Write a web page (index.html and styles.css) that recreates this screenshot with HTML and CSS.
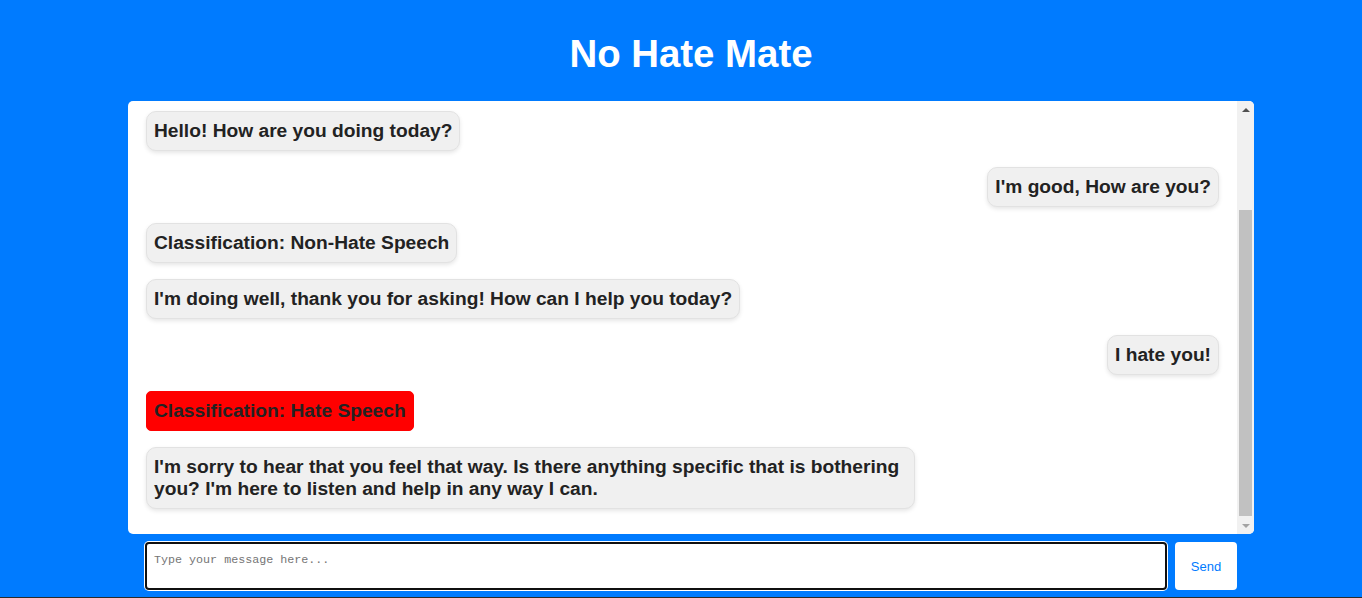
FILE: index.html
```html
<!DOCTYPE html>
<html lang="en">
<head>
<meta charset="utf-8">
<title>No Hate Mate</title>
<link rel="stylesheet" href="styles.css">
</head>
<body>
<main class="app">
  <h1 class="title">No Hate Mate</h1>
  <section class="chat">
    <div class="messages">
      <div class="msg bot">Hello! How are you doing today?</div>
      <div class="msg user">I'm good, How are you?</div>
      <div class="msg bot">Classification: Non-Hate Speech</div>
      <div class="msg bot">I'm doing well, thank you for asking! How can I help you today?</div>
      <div class="msg user">I hate you!</div>
      <div class="msg bot hate">Classification: Hate Speech</div>
      <div class="msg bot">I'm sorry to hear that you feel that way. Is there anything specific that is bothering you? I'm here to listen and help in any way I can.</div>
    </div>
    <div class="scrollbar" aria-hidden="true">
      <div class="sb-btn"><span class="arrow-up"></span></div>
      <div class="sb-track"><div class="sb-thumb"></div></div>
      <div class="sb-btn"><span class="arrow-down"></span></div>
    </div>
  </section>
  <form class="composer">
    <textarea class="input" placeholder="Type your message here..."></textarea>
    <button type="button" class="send">Send</button>
  </form>
</main>
</body>
</html>
```

FILE: styles.css
```css
html {
  background: #2b2b2b;
}

body {
  margin: 0;
  height: 597px;
  background: #007bff;
  font-family: "Liberation Sans", Arial, sans-serif;
  overflow: hidden;
}

.app {
  display: flex;
  flex-direction: column;
  align-items: center;
  padding-left: 20px;
}

.title {
  margin: 32px 0 25px;
  font-size: 38.4px;
  line-height: 44px;
  font-weight: bold;
  color: #ffffff;
}

.chat {
  display: flex;
  width: 1126px;
  height: 433px;
  background: #ffffff;
  border-radius: 5px;
  overflow: hidden;
}

.messages {
  flex: 1;
  min-width: 0;
  overflow: hidden;
  padding: 10px 18px 25px;
  display: flex;
  flex-direction: column;
  gap: 16px;
}

.msg {
  flex: none;
  box-sizing: border-box;
  max-width: 769px;
  padding: 8px 7px;
  border: 1px solid #e2e2e2;
  border-radius: 10px;
  background: #f0f0f0;
  box-shadow: 0 2px 4px rgba(0, 0, 0, 0.1);
  color: #222222;
  font-size: 19.2px;
  line-height: 22px;
  font-weight: bold;
}

.bot {
  align-self: flex-start;
}

.user {
  align-self: flex-end;
}

.hate {
  background: #ff0000;
  border-color: #ff0000;
  border-radius: 5px;
  box-shadow: none;
}

.scrollbar {
  flex: none;
  width: 17px;
  display: flex;
  flex-direction: column;
  background: #f1f1f1;
}

.sb-btn {
  flex: none;
  height: 17px;
  display: flex;
  align-items: center;
  justify-content: center;
}

.arrow-up {
  width: 0;
  height: 0;
  border-left: 4px solid transparent;
  border-right: 4px solid transparent;
  border-bottom: 4px solid #505050;
}

.arrow-down {
  width: 0;
  height: 0;
  border-left: 4px solid transparent;
  border-right: 4px solid transparent;
  border-top: 4px solid #a3a3a3;
}

.sb-track {
  flex: 1;
  display: flex;
  flex-direction: column;
  justify-content: flex-end;
  padding: 0 2px 1px;
}

.sb-thumb {
  height: 306px;
  background: #c1c1c1;
}

.composer {
  display: flex;
  gap: 8px;
  width: 1092px;
  margin: 8px 0 0;
}

.input {
  box-sizing: border-box;
  flex: 1;
  height: 48px;
  margin: 0;
  padding: 9px 7px 7px;
  border: 2px solid #101010;
  border-radius: 4px;
  box-shadow: 0 0 0 1px #ffffff;
  outline: none;
  resize: none;
  font-family: "Liberation Mono", "DejaVu Sans Mono", monospace;
  font-size: 11.7px;
  line-height: 15px;
  background: #ffffff;
}

.input::placeholder {
  color: #757575;
}

.send {
  box-sizing: border-box;
  width: 62px;
  height: 48px;
  border: none;
  border-radius: 4px;
  background: #ffffff;
  color: #007bff;
  font-family: "Liberation Sans", Arial, sans-serif;
  font-size: 13px;
  padding: 0;
}
```
